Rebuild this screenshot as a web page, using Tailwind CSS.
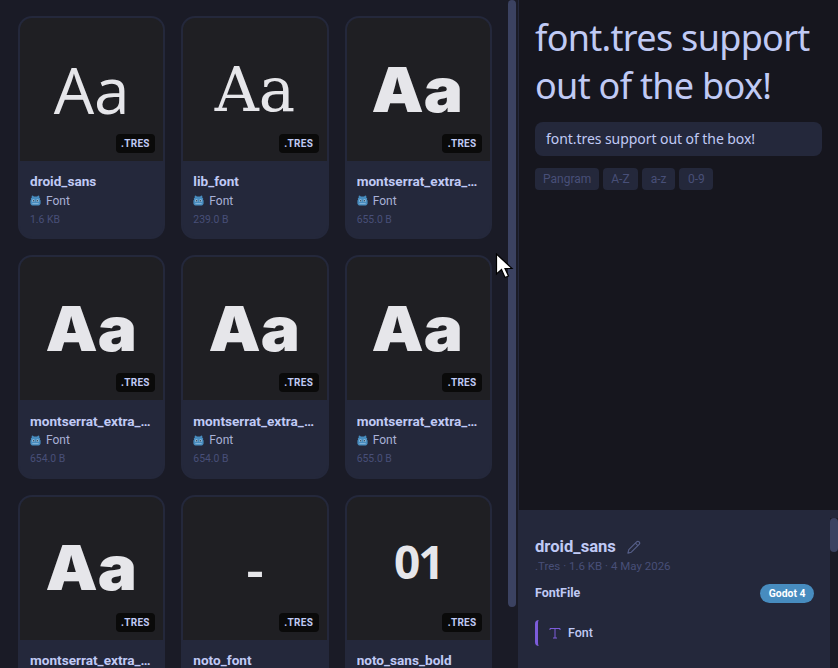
<!DOCTYPE html>
<html lang="en">
<head>
    <meta charset="UTF-8">
    <title>Font assets</title>
    <script src="https://cdn.jsdelivr.net/npm/@tailwindcss/browser@4"></script>
</head>
<body class="bg-[#1a1b26] font-['Roboto',sans-serif] overflow-hidden">
    <svg class="hidden">
        <symbol id="godot" viewBox="1 1 14 14">
            <path fill="#478cbf" d="M4.500 1.500 6 3h4l1.500-1.500 1.500.8-.4 1.700L14 5.500l-.3 1.500.8 1v3.500c0 1-1 2.500-2.500 3H4c-1.500-.5-2.500-2-2.500-3V8l.8-1L2 5.500 3.400 4 3 2.300z"/>
            <circle cx="5.400" cy="8.200" r="1.700" fill="#9cc3e0"/><circle cx="10.600" cy="8.200" r="1.700" fill="#9cc3e0"/>
            <circle cx="5.600" cy="8.300" r="1" fill="#33475a"/><circle cx="10.400" cy="8.300" r="1" fill="#33475a"/>
            <path stroke="#9cc3e0" d="M4 12h8"/>
        </symbol>
    </svg>
    <div class="relative flex h-[668px] w-[838px] overflow-hidden">
        <!-- asset grid -->
        <div class="flex w-[519px] shrink-0 border-r border-[#24283b] overflow-hidden">
            <div class="grid w-[492px] shrink-0 grid-cols-3 gap-4 content-start pl-[18px] pt-4">

                <div class="h-[223.3px] rounded-[14px] border-2 border-[#24283b] bg-[#24283b] overflow-hidden">
                    <div class="relative flex h-[143px] items-center justify-center bg-[#1f1f23] text-[#e6e6ea] font-['Open_Sans'] text-[64px] leading-none">Aa
                        <span class="absolute right-2 bottom-2 h-[19px] rounded bg-[#0a0a0a] px-[5.5px] font-['Roboto'] text-[10px] leading-[19px] font-bold tracking-[.3px] text-[#c0caf5]">.TRES</span>
                    </div>
                    <div class="px-[10px] pt-[12.300px]">
                        <div class="truncate text-[13.6px] leading-4 font-bold text-[#c0caf5]">droid_sans</div>
                        <div class="mt-[3.700px] flex h-4 items-center gap-[5px] text-[12px] text-[#a9b1d6]"><svg class="size-[11px]"><use href="#godot"/></svg>Font</div>
                        <div class="mt-[4px] text-[10.4px] leading-[14px] text-[#484f78]">1.6 KB</div>
                    </div>
                </div>

                <div class="h-[223.3px] rounded-[14px] border-2 border-[#24283b] bg-[#24283b] overflow-hidden">
                    <div class="relative flex h-[143px] items-center justify-center bg-[#1f1f23] text-[#e6e6ea] font-['DejaVu_Serif'] text-[61px] leading-none">Aa
                        <span class="absolute right-2 bottom-2 h-[19px] rounded bg-[#0a0a0a] px-[5.5px] font-['Roboto'] text-[10px] leading-[19px] font-bold tracking-[.3px] text-[#c0caf5]">.TRES</span>
                    </div>
                    <div class="px-[10px] pt-[12.300px]">
                        <div class="truncate text-[13.6px] leading-4 font-bold text-[#c0caf5]">lib_font</div>
                        <div class="mt-[3.700px] flex h-4 items-center gap-[5px] text-[12px] text-[#a9b1d6]"><svg class="size-[11px]"><use href="#godot"/></svg>Font</div>
                        <div class="mt-[4px] text-[10.4px] leading-[14px] text-[#484f78]">239.0 B</div>
                    </div>
                </div>

                <div class="h-[223.3px] rounded-[14px] border-2 border-[#24283b] bg-[#24283b] overflow-hidden">
                    <div class="relative flex h-[143px] items-center justify-center bg-[#1f1f23] text-[#e6e6ea] font-['Inter'] text-[62px] leading-none font-black"><span class="mr-[2px] scale-x-[1.06]">Aa</span>
                        <span class="absolute right-2 bottom-2 h-[19px] rounded bg-[#0a0a0a] px-[5.5px] font-['Roboto'] text-[10px] leading-[19px] font-bold tracking-[.3px] text-[#c0caf5]">.TRES</span>
                    </div>
                    <div class="px-[10px] pt-[12.300px]">
                        <div class="truncate text-[13.6px] leading-4 font-bold text-[#c0caf5]">montserrat_extra_bold</div>
                        <div class="mt-[3.700px] flex h-4 items-center gap-[5px] text-[12px] text-[#a9b1d6]"><svg class="size-[11px]"><use href="#godot"/></svg>Font</div>
                        <div class="mt-[4px] text-[10.4px] leading-[14px] text-[#484f78]">655.0 B</div>
                    </div>
                </div>

                <div class="h-[223.3px] rounded-[14px] border-2 border-[#24283b] bg-[#24283b] overflow-hidden">
                    <div class="relative flex h-[143px] items-center justify-center bg-[#1f1f23] text-[#e6e6ea] font-['Inter'] text-[62px] leading-none font-black"><span class="mr-[2px] scale-x-[1.06]">Aa</span>
                        <span class="absolute right-2 bottom-2 h-[19px] rounded bg-[#0a0a0a] px-[5.5px] font-['Roboto'] text-[10px] leading-[19px] font-bold tracking-[.3px] text-[#c0caf5]">.TRES</span>
                    </div>
                    <div class="px-[10px] pt-[12.300px]">
                        <div class="truncate text-[13.6px] leading-4 font-bold text-[#c0caf5]">montserrat_extra_bold</div>
                        <div class="mt-[3.700px] flex h-4 items-center gap-[5px] text-[12px] text-[#a9b1d6]"><svg class="size-[11px]"><use href="#godot"/></svg>Font</div>
                        <div class="mt-[4px] text-[10.4px] leading-[14px] text-[#484f78]">654.0 B</div>
                    </div>
                </div>

                <div class="h-[223.3px] rounded-[14px] border-2 border-[#24283b] bg-[#24283b] overflow-hidden">
                    <div class="relative flex h-[143px] items-center justify-center bg-[#1f1f23] text-[#e6e6ea] font-['Inter'] text-[62px] leading-none font-black"><span class="mr-[2px] scale-x-[1.06]">Aa</span>
                        <span class="absolute right-2 bottom-2 h-[19px] rounded bg-[#0a0a0a] px-[5.5px] font-['Roboto'] text-[10px] leading-[19px] font-bold tracking-[.3px] text-[#c0caf5]">.TRES</span>
                    </div>
                    <div class="px-[10px] pt-[12.300px]">
                        <div class="truncate text-[13.6px] leading-4 font-bold text-[#c0caf5]">montserrat_extra_bold</div>
                        <div class="mt-[3.700px] flex h-4 items-center gap-[5px] text-[12px] text-[#a9b1d6]"><svg class="size-[11px]"><use href="#godot"/></svg>Font</div>
                        <div class="mt-[4px] text-[10.4px] leading-[14px] text-[#484f78]">654.0 B</div>
                    </div>
                </div>

                <div class="h-[223.3px] rounded-[14px] border-2 border-[#24283b] bg-[#24283b] overflow-hidden">
                    <div class="relative flex h-[143px] items-center justify-center bg-[#1f1f23] text-[#e6e6ea] font-['Inter'] text-[62px] leading-none font-black"><span class="mr-[2px] scale-x-[1.06]">Aa</span>
                        <span class="absolute right-2 bottom-2 h-[19px] rounded bg-[#0a0a0a] px-[5.5px] font-['Roboto'] text-[10px] leading-[19px] font-bold tracking-[.3px] text-[#c0caf5]">.TRES</span>
                    </div>
                    <div class="px-[10px] pt-[12.300px]">
                        <div class="truncate text-[13.6px] leading-4 font-bold text-[#c0caf5]">montserrat_extra_bold</div>
                        <div class="mt-[3.700px] flex h-4 items-center gap-[5px] text-[12px] text-[#a9b1d6]"><svg class="size-[11px]"><use href="#godot"/></svg>Font</div>
                        <div class="mt-[4px] text-[10.4px] leading-[14px] text-[#484f78]">655.0 B</div>
                    </div>
                </div>

                <div class="h-[223.3px] rounded-[14px] border-2 border-[#24283b] bg-[#24283b] overflow-hidden">
                    <div class="relative flex h-[143px] items-center justify-center bg-[#1f1f23] text-[#e6e6ea] font-['Inter'] text-[62px] leading-none font-black"><span class="mr-[2px] scale-x-[1.06]">Aa</span>
                        <span class="absolute right-2 bottom-2 h-[19px] rounded bg-[#0a0a0a] px-[5.5px] font-['Roboto'] text-[10px] leading-[19px] font-bold tracking-[.3px] text-[#c0caf5]">.TRES</span>
                    </div>
                    <div class="px-[10px] pt-[12.300px]">
                        <div class="truncate text-[13.6px] leading-4 font-bold text-[#c0caf5]">montserrat_extra_bold</div>
                    </div>
                </div>

                <div class="h-[223.3px] rounded-[14px] border-2 border-[#24283b] bg-[#24283b] overflow-hidden">
                    <div class="relative flex h-[143px] items-center justify-center bg-[#1f1f23] text-[#e6e6ea] font-['Noto_Sans'] text-[56px] leading-none font-medium">-
                        <span class="absolute right-2 bottom-2 h-[19px] rounded bg-[#0a0a0a] px-[5.5px] font-['Roboto'] text-[10px] leading-[19px] font-bold tracking-[.3px] text-[#c0caf5]">.TRES</span>
                    </div>
                    <div class="px-[10px] pt-[12.300px]">
                        <div class="truncate text-[13.6px] leading-4 font-bold text-[#c0caf5]">noto_font</div>
                    </div>
                </div>

                <div class="h-[223.3px] rounded-[14px] border-2 border-[#24283b] bg-[#24283b] overflow-hidden">
                    <div class="relative flex h-[143px] items-center justify-center bg-[#1f1f23] text-[#e6e6ea] font-['Noto_Sans'] text-[46px] leading-none font-bold tracking-[-2px]"><span class="mb-[14px]">01</span>
                        <span class="absolute right-2 bottom-2 h-[19px] rounded bg-[#0a0a0a] px-[5.5px] font-['Roboto'] text-[10px] leading-[19px] font-bold tracking-[.3px] text-[#c0caf5]">.TRES</span>
                    </div>
                    <div class="px-[10px] pt-[12.300px]">
                        <div class="truncate text-[13.6px] leading-4 font-bold text-[#c0caf5]">noto_sans_bold</div>
                    </div>
                </div>

            </div>
            <!-- grid scrollbar -->
            <div class="ml-4 h-[607px] w-2 rounded-full bg-[#3b4261]"></div>
        </div>

        <!-- preview + details -->
        <div class="flex min-w-0 flex-1 flex-col bg-[#16161e]">
            <div class="h-[510px] shrink-0 px-4 pt-[14px]">
                <h1 class="font-['Noto_Sans'] text-[36px] leading-[48px] tracking-[-.7px] text-[#c0caf5]">font.tres support out of the box!</h1>
                <div class="mt-3 h-[34px] rounded-lg bg-[#24283b] px-[11px] font-['Noto_Sans'] text-[14px] leading-[33px] tracking-[-.06px] text-[#c0caf5]">font.tres support out of the box!</div>
                <div class="mt-3 flex gap-1 text-[12px] leading-[22px] text-[#484f78]">
                    <span class="rounded bg-[#24283b] px-2">Pangram</span>
                    <span class="rounded bg-[#24283b] px-2">A-Z</span>
                    <span class="rounded bg-[#24283b] px-[9px]">a-z</span>
                    <span class="rounded bg-[#24283b] px-[8.500px]">0-9</span>
                </div>
            </div>
            <div class="flex flex-1 bg-[#24283b]">
                <div class="min-w-0 flex-1 pl-4 pr-[16px] pt-[27px]">
                    <div class="flex items-center gap-[10px]">
                        <span class="text-[16.6px] leading-5 font-bold text-[#c0caf5]">droid_sans</span>
                        <svg class="size-[15px] text-[#565f89]" viewBox="0 0 24 24" fill="none" stroke="currentColor" stroke-width="1.800" stroke-linejoin="round"><path d="M3 21l1.500-5.500L17 3a2.800 2.800 0 0 1 4 4L8.500 19.500z"/><path d="M15 5l4 4"/></svg>
                    </div>
                    <div class="mt-[1px] text-[11.5px] leading-4 text-[#484f78]">.Tres · 1.6 KB · 4 May 2026</div>
                    <div class="mt-[10px] flex items-center justify-between">
                        <span class="text-[12.5px] font-bold text-[#c0caf5]">FontFile</span>
                        <span class="rounded-full bg-[#478cbf] px-[8.500px] text-[10.4px] leading-[19px] font-bold text-white">Godot 4</span>
                    </div>
                    <div class="mt-[17px] flex h-[26px] items-center gap-[7px] rounded-sm border-l-[3px] border-[#7c5cdb] pl-[11px]">
                        <svg class="size-[12px] text-[#7c5cdb]" viewBox="0 0 12 12" fill="none" stroke="currentColor" stroke-width="1"><path d="M1 3V1.500h10V3M6 1.500V11M4 11h4"/></svg>
                        <span class="text-[12.5px] font-medium text-[#c0caf5]">Font</span>
                    </div>
                </div>
                <div class="mt-2 w-2 shrink-0 bg-[#1a1b26]">
                    <div class="h-[34px] rounded-full bg-[#3b4261]"></div>
                </div>
            </div>
        </div>

        <!-- mouse pointer -->
        <svg class="absolute left-[495px] top-[253px] h-[26px] w-[19px]" viewBox="0 0 19 26"><path d="M1.500 1v20l5-4.500 3.500 8 3.500-1.500-3.500-7.500h7z" fill="#fff" stroke="#000" stroke-width="1.200"/></svg>
    </div>
</body>
</html>
